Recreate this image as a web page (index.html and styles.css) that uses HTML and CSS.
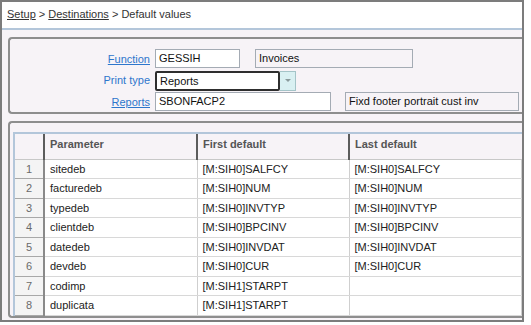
FILE: index.html
```html
<!DOCTYPE html>
<html lang="en">
<head>
    <meta charset="UTF-8">
    <title>Default values</title>
    <link rel="stylesheet" href="styles.css">
</head>
<body>
    <div class="window">
        <!-- Breadcrumb -->
        <div class="breadcrumb">
            <a href="#">Setup</a> &gt; <a href="#">Destinations</a> &gt; Default values
        </div>

        <div class="content">
            <!-- Header fields -->
            <div class="group form-group">
                <div class="form-row">
                    <a href="#" class="label link">Function</a>
                    <div class="fields">
                        <div class="input w-function">GESSIH</div>
                        <div class="input readonly w-invoices">Invoices</div>
                    </div>
                </div>
                <div class="form-row">
                    <span class="label">Print type</span>
                    <div class="fields">
                        <div class="select">
                            <div class="select-value">Reports</div>
                            <div class="select-btn"><span class="arrow"></span></div>
                        </div>
                    </div>
                </div>
                <div class="form-row">
                    <a href="#" class="label link">Reports</a>
                    <div class="fields">
                        <div class="input w-report">SBONFACP2</div>
                        <div class="input readonly w-desc">Fixd footer portrait cust inv</div>
                    </div>
                </div>
            </div>

            <!-- Parameters grid -->
            <div class="group table-group">
                <div class="grid-wrap">
                    <table class="grid">
                        <thead>
                            <tr>
                                <th class="num"></th>
                                <th class="c-param">Parameter</th>
                                <th class="c-first">First default</th>
                                <th>Last default</th>
                            </tr>
                        </thead>
                        <tbody>
                            <tr><td class="num">1</td><td>sitedeb</td><td>[M:SIH0]SALFCY</td><td>[M:SIH0]SALFCY</td></tr>
                            <tr><td class="num">2</td><td>facturedeb</td><td>[M:SIH0]NUM</td><td>[M:SIH0]NUM</td></tr>
                            <tr><td class="num">3</td><td>typedeb</td><td>[M:SIH0]INVTYP</td><td>[M:SIH0]INVTYP</td></tr>
                            <tr><td class="num">4</td><td>clientdeb</td><td>[M:SIH0]BPCINV</td><td>[M:SIH0]BPCINV</td></tr>
                            <tr><td class="num">5</td><td>datedeb</td><td>[M:SIH0]INVDAT</td><td>[M:SIH0]INVDAT</td></tr>
                            <tr><td class="num">6</td><td>devdeb</td><td>[M:SIH0]CUR</td><td>[M:SIH0]CUR</td></tr>
                            <tr><td class="num">7</td><td>codimp</td><td>[M:SIH1]STARPT</td><td></td></tr>
                            <tr><td class="num">8</td><td>duplicata</td><td>[M:SIH1]STARPT</td><td></td></tr>
                        </tbody>
                    </table>
                </div>
            </div>
        </div>
    </div>
</body>
</html>
```

FILE: styles.css
```css
/* Basic Reset */
* {
    margin: 0;
    padding: 0;
    box-sizing: border-box;
}

body {
    background: #fff;
    color: #222;
    font-family: 'Liberation Sans', Arial, sans-serif;
    font-size: 11px;
}

/* Outer window frame */
.window {
    width: 524px;
    height: 322px;
    border: 2px solid #7c7c7c;
    display: flex;
    flex-direction: column;
    overflow: hidden;
}

/* Breadcrumb */
.breadcrumb {
    height: 28px;
    line-height: 25px;
    padding-left: 5px;
    background: #fff;
    color: #333;
    border-bottom: 2px solid #b3c6da;
    flex-shrink: 0;
}

.breadcrumb a {
    color: #333;
    text-decoration: underline;
}

/* Content area */
.content {
    flex: 1;
    background: #f7f3f7;
    padding: 7px 0 0 6px;
    display: flex;
    flex-direction: column;
    min-height: 0;
}

.group {
    border: 2px solid #8e8e8e;
    border-right: none;
    border-radius: 4px 0 0 4px;
}

/* Form fields */
.form-group {
    height: 77px;
    padding-top: 10px;
    margin-bottom: 7px;
    flex-shrink: 0;
}

.form-row {
    display: flex;
    align-items: center;
    height: 19px;
    margin-bottom: 2.5px;
}

.label {
    width: 140px;
    text-align: right;
    margin-right: 5px;
    color: #2e76cc;
    text-decoration: none;
}

.label.link {
    text-decoration: underline;
}

.fields {
    display: flex;
    gap: 14px;
    height: 19px;
}

.input {
    height: 19px;
    line-height: 17px;
    padding-left: 3px;
    background: #fff;
    border: 1px solid #a4abb4;
    color: #111;
    white-space: nowrap;
}

.input.readonly {
    background: #f7f3f7;
}

.w-function { width: 85px; }
.w-invoices { width: 158px; margin-left: 1px; }
.w-report { width: 176px; }
.w-desc { width: 174px; }

/* Print type select */
.select {
    display: flex;
    height: 20px;
}

.select-value {
    width: 125px;
    line-height: 16px;
    padding-left: 3px;
    background: #fff;
    border: 2px solid #2e2e2e;
    border-radius: 2px;
    color: #111;
}

.select-btn {
    width: 16px;
    background: #d9f0f2;
    border: 1px solid #a4c4c8;
    border-left: none;
    display: flex;
    align-items: center;
    justify-content: center;
}

.arrow {
    width: 0;
    height: 0;
    border-left: 3px solid transparent;
    border-right: 3px solid transparent;
    border-top: 3px solid #8a9a9c;
}

/* Parameters grid */
.table-group {
    flex: 1;
    padding: 9px 0 0 3px;
    margin-bottom: 2px;
    overflow: hidden;
}

.grid-wrap {
    border-top: 2px solid #b3c6da;
    border-left: 2px solid #b3c6da;
}

.grid {
    width: 100%;
    border-collapse: collapse;
    table-layout: fixed;
}

.grid th {
    height: 25px;
    text-align: left;
    padding: 0 0 5px 5px;
    font-weight: bold;
    color: #555;
    background: #f7f3f7;
    border-right: 2px solid #5c5c5c;
    border-bottom: 1px solid #c8c8c8;
}

.grid th:last-child {
    border-right: none;
}

.grid th.num { width: 29px; }
.grid th.c-param { width: 153px; }
.grid th.c-first { width: 152px; }

.grid td {
    height: 19.5px;
    padding-left: 5px;
    background: #fff;
    color: #222;
    border-right: 1px solid #cfcfcf;
    border-bottom: 1px solid #d8d8d8;
    white-space: nowrap;
}

.grid td.num {
    padding-left: 0;
    text-align: center;
    color: #6a6a6a;
    background: #f4f4f4;
    border-right: 2px solid #8a8a8a;
    border-bottom: 1px solid #a8a8a8;
}
```
